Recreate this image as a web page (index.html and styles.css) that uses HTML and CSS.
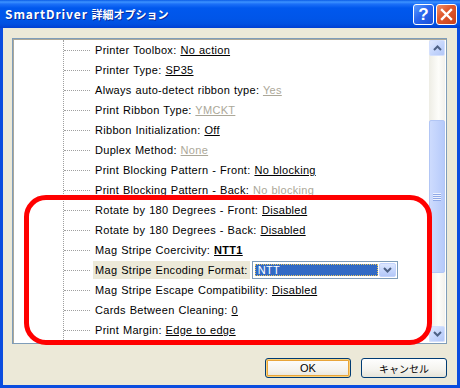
FILE: index.html
```html
<!DOCTYPE html>
<html lang="ja">
<head>
<meta charset="utf-8">
<title>SmartDriver 詳細オプション</title>
<link rel="stylesheet" href="styles.css">
</head>
<body>
<div class="window">
  <div class="titlebar">
    <span class="title">SmartDriver <span class="jp">詳細オプション</span></span>
    <div class="tbtns">
      <span class="tb help">?</span>
      <span class="tb close"><svg width="13" height="13" viewBox="0 0 13 13"><path d="M2 2 L11 11 M11 2 L2 11" stroke="#fff" stroke-width="2.4" stroke-linecap="square" fill="none"/></svg></span>
    </div>
  </div>
  <div class="client">
    <div class="treebox">
      <div class="tree">
        <div class="trunk">
          <div class="row"><span class="label">Printer Toolbox: <u>No action</u></span></div>
          <div class="row"><span class="label">Printer Type: <u>SP35</u></span></div>
          <div class="row"><span class="label">Always auto-detect ribbon type: <u class="dis">Yes</u></span></div>
          <div class="row"><span class="label">Print Ribbon Type: <u class="dis">YMCKT</u></span></div>
          <div class="row"><span class="label">Ribbon Initialization: <u>Off</u></span></div>
          <div class="row"><span class="label">Duplex Method: <u class="dis">None</u></span></div>
          <div class="row"><span class="label">Print Blocking Pattern - Front: <u>No blocking</u></span></div>
          <div class="row"><span class="label">Print Blocking Pattern - Back: <u class="dis">No blocking</u></span></div>
          <div class="row"><span class="label">Rotate by 180 Degrees - Front: <u>Disabled</u></span></div>
          <div class="row"><span class="label">Rotate by 180 Degrees - Back: <u>Disabled</u></span></div>
          <div class="row"><span class="label">Mag Stripe Coercivity: <u class="bold">NTT1</u></span></div>
          <div class="row sel"><span class="label">Mag Stripe Encoding Format:</span>
            <span class="combo"><span class="val">NTT</span><span class="drop"><svg width="9" height="6" viewBox="0 0 9 6"><path d="M1 1 L4.5 4.5 L8 1" stroke="#4d6185" stroke-width="2" fill="none"/></svg></span></span>
          </div>
          <div class="row"><span class="label">Mag Stripe Escape Compatibility: <u>Disabled</u></span></div>
          <div class="row"><span class="label">Cards Between Cleaning: <u>0</u></span></div>
          <div class="row"><span class="label">Print Margin: <u>Edge to edge</u></span></div>
        </div>
      </div>
      <div class="sb">
        <span class="sb-btn"><svg width="9" height="6" viewBox="0 0 9 6"><path d="M1 5 L4.5 1.5 L8 5" stroke="#4d6185" stroke-width="2" fill="none"/></svg></span>
        <div class="sb-track"><div class="thumb"><span class="grip"></span></div></div>
        <span class="sb-btn"><svg width="9" height="6" viewBox="0 0 9 6"><path d="M1 1 L4.5 4.5 L8 1" stroke="#4d6185" stroke-width="2" fill="none"/></svg></span>
      </div>
    </div>
    <div class="actions">
      <button class="btn default">OK</button>
      <button class="btn jpbtn">キャンセル</button>
    </div>
  </div>
  <div class="annot"></div>
</div>
</body>
</html>
```

FILE: styles.css
```css
html, body {
  margin: 0;
  padding: 0;
}
body {
  width: 460px;
  height: 388px;
  overflow: hidden;
  font-family: "Liberation Sans", Arial, sans-serif;
}
.window {
  position: relative;
  width: 460px;
  height: 388px;
  display: flex;
  flex-direction: column;
  background: #0b4ddf;
}
.titlebar {
  height: 28px;
  flex: none;
  display: flex;
  align-items: center;
  justify-content: space-between;
  padding: 0 3px 0 5px;
  background: linear-gradient(to bottom, #0a5ce6 0, #3d93ff 2px, #1c70f8 4px, #0058ee 8px, #0055e8 19px, #0150e0 24px, #003fd2 28px);
}
.title {
  color: #fff;
  font-family: "Noto Sans CJK JP", "DejaVu Sans", sans-serif;
  font-weight: bold;
  font-size: 12px;
  letter-spacing: 0.9px;
  text-shadow: 1px 1px 0 #0a2a9a;
  margin-top: -1px;
}
.title .jp {
  font-size: 11px;
  letter-spacing: 0;
}
.tbtns {
  display: flex;
  gap: 2px;
}
.tb {
  width: 21px;
  height: 21px;
  box-sizing: border-box;
  border: 1px solid #fff;
  border-radius: 3px;
  display: flex;
  align-items: center;
  justify-content: center;
  color: #fff;
}
.help {
  background: linear-gradient(135deg, #5b9bff 0, #2a66ee 45%, #1b50d8 100%);
  font-family: "Liberation Sans", Arial, sans-serif;
  font-weight: bold;
  font-size: 17px;
  line-height: 1;
}
.close {
  background: linear-gradient(135deg, #f0906a 0, #e05a2f 40%, #c8401a 100%);
}
.client {
  flex: 1;
  margin: 0 3px 3px;
  background: #ece9d8;
  display: flex;
  flex-direction: column;
}
.treebox {
  margin: 10px 10px 0 9px;
  height: 306px;
  box-sizing: border-box;
  border: 1px solid #7f9db9;
  padding: 1px;
  background: #fff;
  box-shadow: inset 1px 1px 0 #aca899;
  display: flex;
  overflow: hidden;
}
.tree {
  flex: 1;
  padding-left: 49px;
  display: flex;
  overflow: hidden;
}
.trunk {
  flex: 1;
  border-left: 1px dotted #a0a0a0;
}
.row {
  height: 20px;
  display: flex;
  align-items: center;
  white-space: nowrap;
  font-size: 11px;
  letter-spacing: 0.3px;
  word-spacing: 0.5px;
  color: #000;
}
.row::before {
  content: "";
  flex: none;
  width: 26px;
  height: 0;
  border-top: 1px dotted #a0a0a0;
  margin-right: 3px;
}
.label {
  padding: 0 2px;
  line-height: 18px;
}
.dis {
  color: #aca899;
}
.bold {
  font-weight: bold;
}
.row.sel .label {
  background: #ece9d8;
}
.combo {
  margin-left: 2px;
  width: 146px;
  height: 18px;
  box-sizing: border-box;
  border: 1px solid #7f9db9;
  padding: 1px;
  background: #fff;
  display: flex;
  align-items: stretch;
}
.combo .val {
  flex: 1;
  margin: 1px 0 1px 1px;
  background: #316ac5;
  color: #fff;
  outline: 1px dotted #e8c860;
  outline-offset: -1px;
  padding-left: 3px;
  line-height: 12px;
  font-size: 11px;
}
.combo .drop {
  width: 17px;
  margin-left: 1px;
  box-sizing: border-box;
  border: 1px solid #c3d3fd;
  border-radius: 2px;
  background: linear-gradient(to bottom, #dde7fe, #c3d4fc 60%, #b4c8f8);
  display: flex;
  align-items: center;
  justify-content: center;
}
.sb {
  width: 16px;
  flex: none;
  display: flex;
  flex-direction: column;
  background: linear-gradient(to right, #eeede5, #fdfdfa 60%, #f3f1ec);
}
.sb-btn {
  height: 16px;
  flex: none;
  box-sizing: border-box;
  border: 1px solid #d4e0fd;
  border-radius: 2px;
  background: linear-gradient(to bottom right, #e0e9fe, #c4d5fc 55%, #b3c7f7);
  display: flex;
  align-items: center;
  justify-content: center;
}
.sb-track {
  flex: 1;
}
.thumb {
  margin-top: 64px;
  height: 153px;
  box-sizing: border-box;
  border: 1px solid #b2c6f5;
  border-radius: 2px;
  background: linear-gradient(to right, #cddbfd, #c2d3fc 50%, #b6cafa);
  display: flex;
  align-items: center;
  justify-content: center;
}
.grip {
  width: 8px;
  height: 8px;
  background: repeating-linear-gradient(to bottom, #eef3fe 0, #eef3fe 1px, #8fa9e8 1px, #8fa9e8 2px);
}
.actions {
  display: flex;
  justify-content: flex-end;
  gap: 10px;
  margin: 14px 10px 0 0;
}
.btn {
  width: 86px;
  height: 20px;
  box-sizing: border-box;
  border: 1px solid #003c74;
  border-radius: 3px;
  background: linear-gradient(to bottom, #fefefe, #f4f3ee 60%, #e6e4d8);
  font-family: "Liberation Sans", Arial, sans-serif;
  font-size: 11px;
  color: #000;
  padding: 0;
}
.btn.default {
  box-shadow: inset 0 0 0 1px #fbd27a, inset 0 0 0 2px #e8a53a;
}
.jpbtn {
  font-family: "Noto Sans CJK JP", sans-serif;
  font-size: 10px;
}
.annot {
  position: absolute;
  left: 24px;
  top: 195px;
  width: 408px;
  height: 150px;
  box-sizing: border-box;
  border: 5px solid #ff0000;
  border-radius: 22px;
  pointer-events: none;
}
```
